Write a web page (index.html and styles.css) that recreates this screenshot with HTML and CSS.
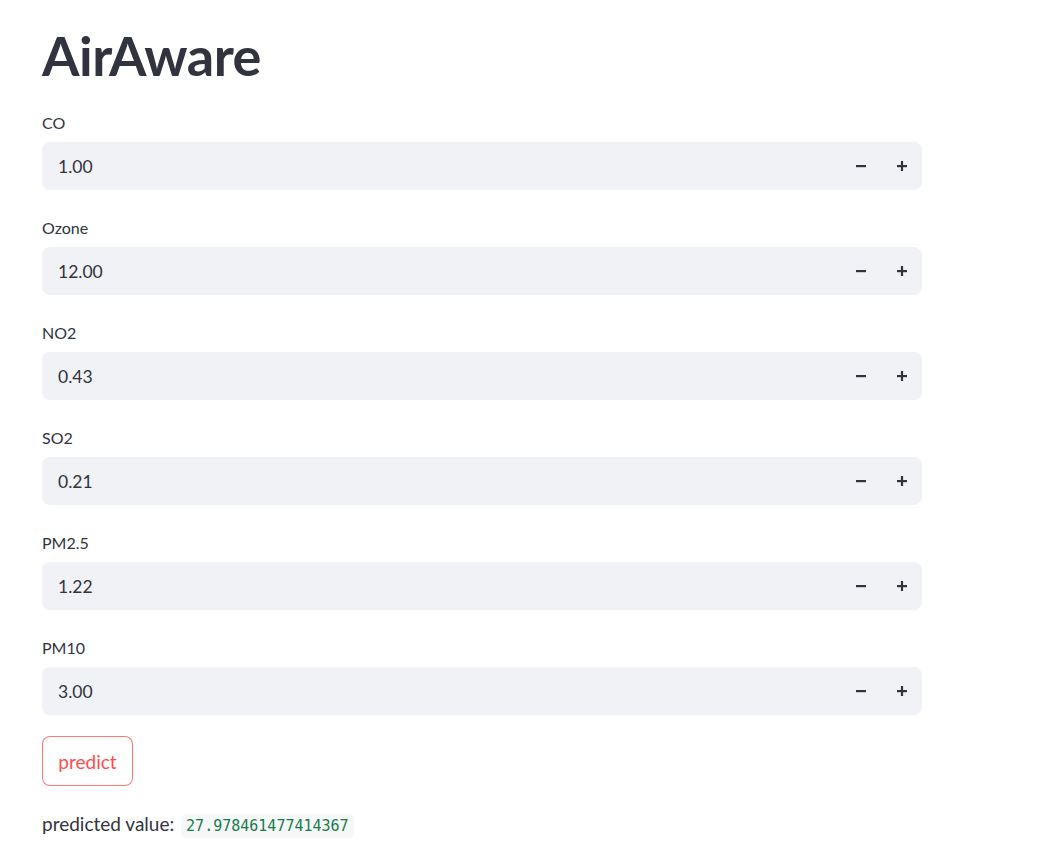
FILE: index.html
```html
<!DOCTYPE html>
<html>
<head>
<meta charset="utf-8">
<link rel="stylesheet" href="styles.css">
</head>
<body>
<main class="main">
  <h1 class="title">AirAware</h1>
  <div class="field">
    <label class="label">CO</label>
    <div class="input"><span class="value">1.00</span><div class="steps"><span class="step"><svg width="12" height="12" viewBox="0 0 12 12"><rect x="1" y="5" width="10" height="2.2" fill="#31333f"/></svg></span><span class="step"><svg width="12" height="12" viewBox="0 0 12 12"><rect x="1" y="5" width="10" height="2.2" fill="#31333f"/><rect x="4.9" y="1" width="2.2" height="10" fill="#31333f"/></svg></span></div></div>
  </div>
  <div class="field">
    <label class="label">Ozone</label>
    <div class="input"><span class="value">12.00</span><div class="steps"><span class="step"><svg width="12" height="12" viewBox="0 0 12 12"><rect x="1" y="5" width="10" height="2.2" fill="#31333f"/></svg></span><span class="step"><svg width="12" height="12" viewBox="0 0 12 12"><rect x="1" y="5" width="10" height="2.2" fill="#31333f"/><rect x="4.9" y="1" width="2.2" height="10" fill="#31333f"/></svg></span></div></div>
  </div>
  <div class="field">
    <label class="label">NO2</label>
    <div class="input"><span class="value">0.43</span><div class="steps"><span class="step"><svg width="12" height="12" viewBox="0 0 12 12"><rect x="1" y="5" width="10" height="2.2" fill="#31333f"/></svg></span><span class="step"><svg width="12" height="12" viewBox="0 0 12 12"><rect x="1" y="5" width="10" height="2.2" fill="#31333f"/><rect x="4.9" y="1" width="2.2" height="10" fill="#31333f"/></svg></span></div></div>
  </div>
  <div class="field">
    <label class="label">SO2</label>
    <div class="input"><span class="value">0.21</span><div class="steps"><span class="step"><svg width="12" height="12" viewBox="0 0 12 12"><rect x="1" y="5" width="10" height="2.2" fill="#31333f"/></svg></span><span class="step"><svg width="12" height="12" viewBox="0 0 12 12"><rect x="1" y="5" width="10" height="2.2" fill="#31333f"/><rect x="4.9" y="1" width="2.2" height="10" fill="#31333f"/></svg></span></div></div>
  </div>
  <div class="field">
    <label class="label">PM2.5</label>
    <div class="input"><span class="value">1.22</span><div class="steps"><span class="step"><svg width="12" height="12" viewBox="0 0 12 12"><rect x="1" y="5" width="10" height="2.2" fill="#31333f"/></svg></span><span class="step"><svg width="12" height="12" viewBox="0 0 12 12"><rect x="1" y="5" width="10" height="2.2" fill="#31333f"/><rect x="4.9" y="1" width="2.2" height="10" fill="#31333f"/></svg></span></div></div>
  </div>
  <div class="field">
    <label class="label">PM10</label>
    <div class="input"><span class="value">3.00</span><div class="steps"><span class="step"><svg width="12" height="12" viewBox="0 0 12 12"><rect x="1" y="5" width="10" height="2.2" fill="#31333f"/></svg></span><span class="step"><svg width="12" height="12" viewBox="0 0 12 12"><rect x="1" y="5" width="10" height="2.2" fill="#31333f"/><rect x="4.9" y="1" width="2.2" height="10" fill="#31333f"/></svg></span></div></div>
  </div>
  <button class="btn">predict</button>
  <p class="result">predicted value: <code class="code">27.978461477414367</code></p>
</main>
</body>
</html>
```
FILE: styles.css
```css
html, body {
  margin: 0;
  padding: 0;
  background: #ffffff;
}
body {
  font-family: "Lato", "Noto Sans", sans-serif;
  color: #31333f;
}
.main {
  width: 880px;
  padding: 0 0 0 42px;
  display: flex;
  flex-direction: column;
}
.title {
  margin: 0;
  padding-top: 23px;
  height: 112px;
  flex-shrink: 0;
  box-sizing: border-box;
  font-size: 54px;
  line-height: 66px;
  font-weight: 700;
  letter-spacing: -0.5px;
}
.field {
  display: flex;
  flex-direction: column;
  gap: 8px;
  margin-bottom: 27px;
}
.label {
  font-size: 16px;
  line-height: 22px;
}
.input {
  height: 48px;
  background: #f0f2f6;
  border-radius: 8px;
  display: flex;
  align-items: center;
  justify-content: space-between;
  padding-left: 16px;
}
.value {
  font-size: 17.5px;
}
.steps {
  display: flex;
  height: 100%;
}
.step {
  width: 41px;
  display: flex;
  align-items: center;
  justify-content: center;
}
.btn {
  align-self: flex-start;
  margin-top: -6px;
  width: 91px;
  height: 50px;
  background: #fff;
  border: 1px solid rgba(255, 75, 75, 0.75);
  border-radius: 8px;
  color: #ff4b4b;
  font-family: inherit;
  font-size: 19px;
}
.result {
  margin: 25px 0 0;
  font-size: 19px;
  line-height: 26px;
}
.code {
  font-family: "DejaVu Sans Mono", monospace;
  font-size: 15px;
  color: #187c48;
  background: #f6f7f9;
  padding: 3px 5px;
  margin-left: 2px;
  border-radius: 5px;
}
```
